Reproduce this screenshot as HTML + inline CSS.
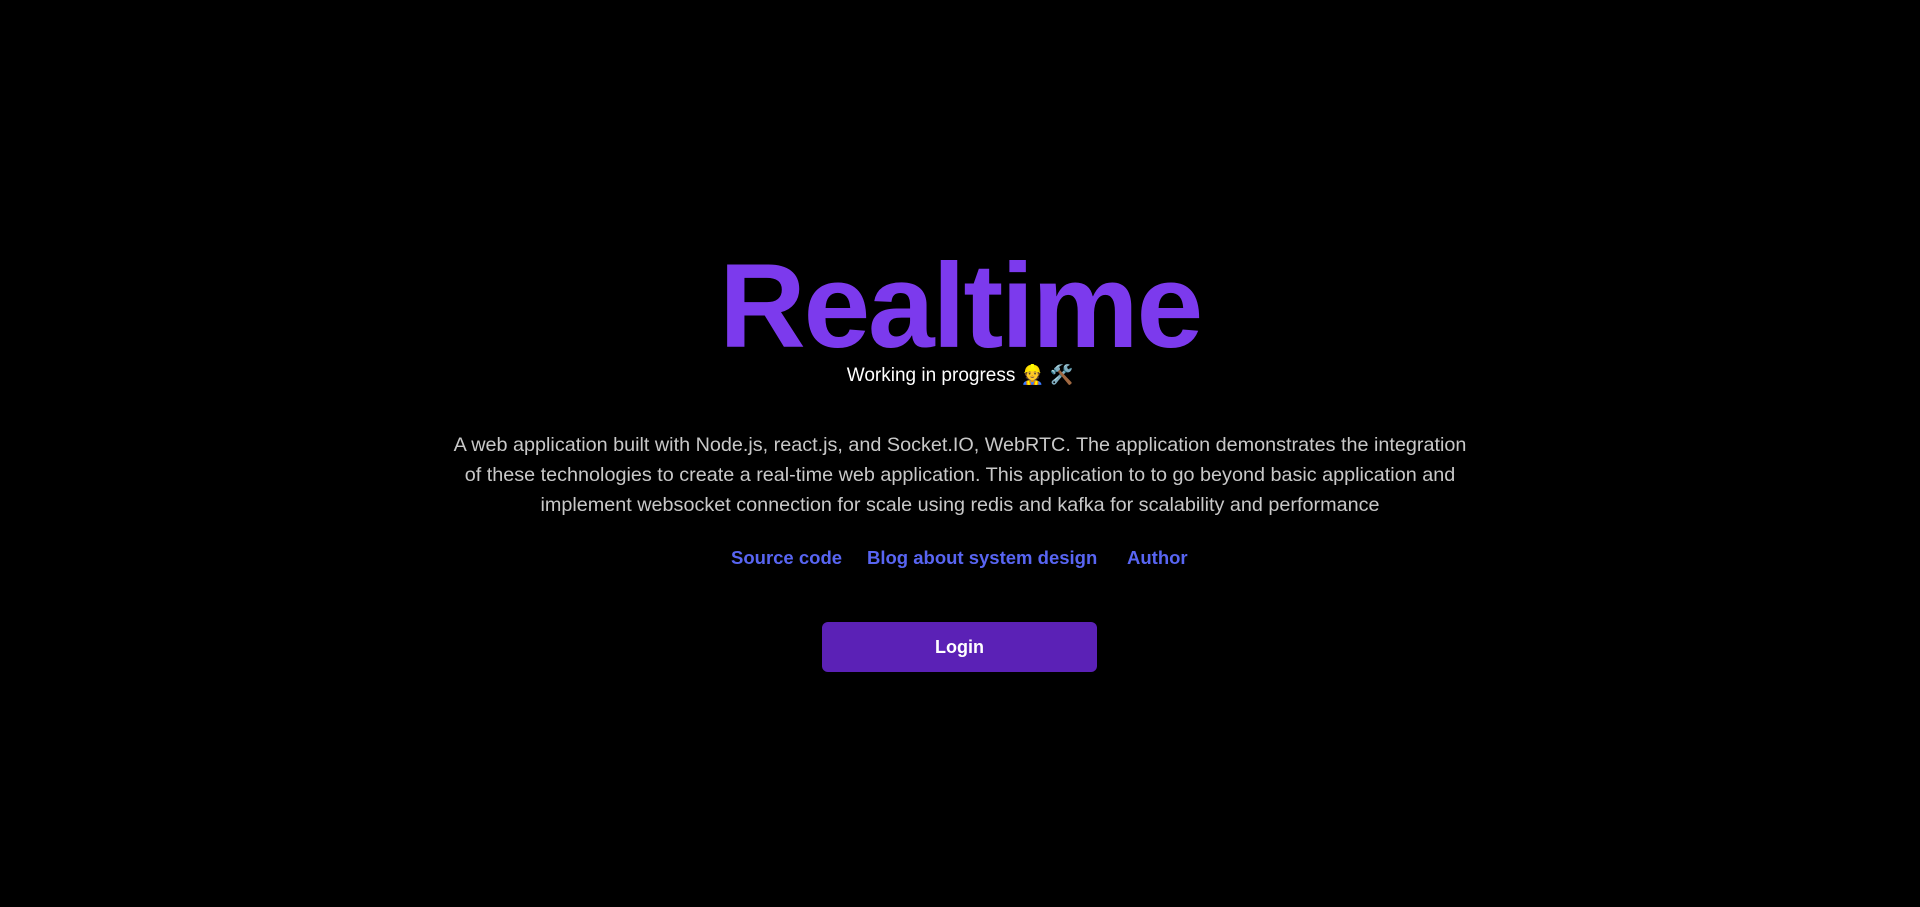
<!DOCTYPE html>
<html><head><meta charset="utf-8"><style>
html,body{margin:0;padding:0;background:#000;width:1920px;height:907px;overflow:hidden;font-family:"Liberation Sans",sans-serif}
.t{position:absolute;left:0;width:1920px;text-align:center;white-space:nowrap}
h1{margin:0;font-size:120px;font-weight:bold;color:#7c3aed;top:236px;line-height:140px;letter-spacing:-2.3px}
.sub{top:364px;font-size:19px;color:#fff;line-height:24px}
.p{top:430px;font-size:19.8px;color:#c8c8c8;line-height:30px}
.l{position:absolute;top:546px;font-size:18.5px;font-weight:bold;color:#5865f2;white-space:nowrap;line-height:24px}
.btn{position:absolute;left:822px;top:622px;width:275px;height:50px;background:#5b21b6;border-radius:6px;color:#fff;font-weight:bold;font-size:18px;text-align:center;line-height:50px}
</style></head><body>
<h1 class="t">Realtime</h1>
<div class="t sub">Working in progress 👷 🛠️</div>
<div class="t p">A web application built with Node.js, react.js, and Socket.IO, WebRTC. The application demonstrates the integration<br>of these technologies to create a real-time web application. This application to to go beyond basic application and<br>implement websocket connection for scale using redis and kafka for scalability and performance</div>
<div class="l" style="left:731px">Source code</div>
<div class="l" style="left:867px">Blog about system design</div>
<div class="l" style="left:1127px">Author</div>
<div class="btn">Login</div>
</body></html>
